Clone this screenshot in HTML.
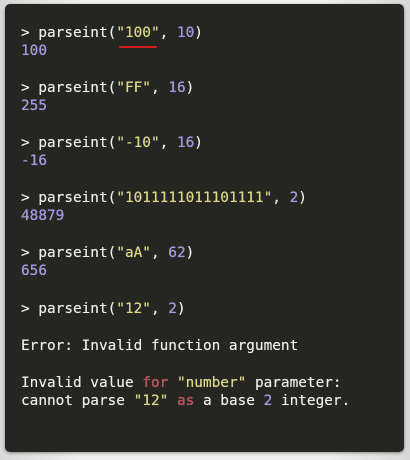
<!DOCTYPE html>
<html><head><style>
html,body{margin:0;padding:0;}
body{width:410px;height:460px;background:linear-gradient(90deg,#d8d8d8,#f0f0f0 20%,#f0f0f0 80%,#d8d8d8);position:relative;overflow:hidden;}
.panel{position:absolute;left:5px;top:4px;width:399px;height:448px;background:#252521;border-radius:5px;box-shadow:0 1px 3px rgba(0,0,0,.4);}
.l{position:absolute;left:21px;font-family:"DejaVu Sans Mono","Liberation Mono",monospace;font-size:14.4px;color:#ececec;white-space:pre;line-height:17px;text-shadow:0 0 0.4px #ececec;}
.y{color:#dcd87e}.p{color:#a296ea}.r{color:#cc4452}
.u{position:absolute;left:119px;top:46px;width:38px;height:2px;background:#d02020;border-radius:1px;}
</style></head><body>
<div class="panel"></div>
<div class="l" style="top:25px">&gt; parseint(<span class="y">"100"</span>, <span class="p">10</span>)</div>
<div class="u"></div>
<div class="l p" style="top:43px">100</div>
<div class="l" style="top:80px">&gt; parseint(<span class="y">"FF"</span>, <span class="p">16</span>)</div>
<div class="l p" style="top:98px">255</div>
<div class="l" style="top:135px">&gt; parseint(<span class="y">"-10"</span>, <span class="p">16</span>)</div>
<div class="l p" style="top:153px">-16</div>
<div class="l" style="top:190px">&gt; parseint(<span class="y">"1011111011101111"</span>, <span class="p">2</span>)</div>
<div class="l p" style="top:208px">48879</div>
<div class="l" style="top:245px">&gt; parseint(<span class="y">"aA"</span>, <span class="p">62</span>)</div>
<div class="l p" style="top:263px">656</div>
<div class="l" style="top:301px">&gt; parseint(<span class="y">"12"</span>, <span class="p">2</span>)</div>
<div class="l" style="top:338px">Error: Invalid function argument</div>
<div class="l" style="top:375px">Invalid value <span class="r">for</span> <span class="y">"number"</span> parameter:</div>
<div class="l" style="top:393px">cannot parse <span class="y">"12"</span> <span class="r">as</span> a base <span class="p">2</span> integer.</div>
</body></html>
